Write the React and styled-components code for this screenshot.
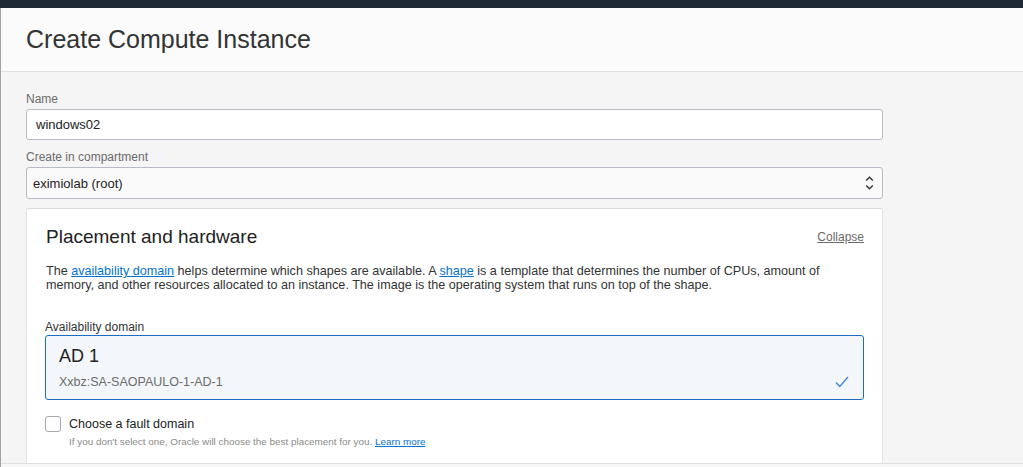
import React from "react";
import styled, { createGlobalStyle } from "styled-components";

const GlobalStyle = createGlobalStyle`
  html, body {
    margin: 0;
    padding: 0;
    height: 100%;
  }
  body {
    font-family: "Liberation Sans", Arial, Helvetica, sans-serif;
    color: #333;
    background: #f5f5f5;
  }
  * {
    box-sizing: border-box;
  }
`;

const Page = styled.div`
  display: flex;
  flex-direction: column;
  height: 100vh;
  overflow: hidden;
`;

const TopBar = styled.div`
  height: 8px;
  flex: none;
  background-color: #1f2935;
`;

const Frame = styled.div`
  flex: 1;
  display: flex;
  flex-direction: column;
  min-height: 0;
  border-left: 1px solid #a2a2a2;
`;

const Header = styled.header`
  flex: none;
  height: 64px;
  display: flex;
  align-items: center;
  padding: 0 25px 2px;
  background-color: #fbfbfb;
  border-bottom: 1px solid #e2e2e2;
`;

const Title = styled.h1`
  margin: 0;
  font-size: 25px;
  font-weight: 400;
  line-height: 28px;
  color: #333;
`;

const Body = styled.main`
  flex: 1;
  min-height: 0;
  overflow: hidden;
  padding: 20px 25px 0;
  background-color: #f5f5f5;
`;

const Form = styled.div`
  width: 857px;
  display: flex;
  flex-direction: column;
`;

const Field = styled.div`
  display: flex;
  flex-direction: column;
  gap: ${(p) => p.$gap ?? 3}px;
  margin-bottom: ${(p) => p.$space ?? 10}px;
`;

const Label = styled.label`
  font-size: 12px;
  line-height: 14px;
  color: ${(p) => (p.$dark ? "#333" : "#6b6b6b")};
`;

const TextInput = styled.input`
  height: 31px;
  width: 100%;
  padding: 0 9px;
  font-family: inherit;
  font-size: 13px;
  color: #222;
  background: #fff;
  border: 1px solid #b7bbc3;
  border-radius: 3px;
  outline: none;
`;

const Select = styled.div`
  height: 32px;
  display: flex;
  align-items: center;
  justify-content: space-between;
  padding: 0 8px 0 6px;
  font-size: 13px;
  color: #222;
  background: #fafafa;
  border: 1px solid #b7bbc3;
  border-radius: 3px;
`;

const Card = styled.section`
  background: #fff;
  border: 1px solid #e3e3e3;
  border-top-color: #dadada;
  border-radius: 2px 2px 0 0;
  padding: 16px 18px 40px;
`;

const CardHead = styled.div`
  display: flex;
  align-items: center;
  justify-content: space-between;
  height: 24px;
`;

const CardTitle = styled.h2`
  margin: 0;
  font-size: 19px;
  font-weight: 400;
  line-height: 22px;
  color: #222;
  padding-left: 1px;
`;

const MutedLink = styled.a`
  font-size: 12px;
  color: #6b6b6b;
  text-decoration: underline;
  cursor: pointer;
`;

const Description = styled.p`
  margin: 15px 0 28px;
  padding: 0 20px 0 1px;
  font-size: 12.6px;
  line-height: 14px;
  color: #333;
`;

const Link = styled.a`
  color: #0572ce;
  text-decoration: underline;
  cursor: pointer;
`;

const Tile = styled.div`
  display: flex;
  flex-direction: column;
  padding: 10px 14px 9px 13px;
  background: #f3f7fc;
  border: 1px solid #1c6dbf;
  border-radius: 3px;
`;

const TileTitle = styled.div`
  font-size: 18px;
  line-height: 20px;
  color: #222;
`;

const TileSub = styled.div`
  display: flex;
  align-items: center;
  justify-content: space-between;
  margin-top: 8px;
  height: 16px;
  font-size: 12.5px;
  color: #6b6b6b;
`;

const CheckRow = styled.div`
  display: flex;
  align-items: center;
  gap: 8px;
  margin-top: 16px;
`;

const Checkbox = styled.span`
  width: 16px;
  height: 16px;
  flex: none;
  background: #fff;
  border: 1px solid #a4a7ad;
  border-radius: 3px;
`;

const CheckLabel = styled.span`
  font-size: 12.5px;
  color: #222;
`;

const Hint = styled.div`
  margin: 4px 0 0 24px;
  font-size: 9.9px;
  color: #8a8a8a;
`;

const Footer = styled.footer`
  flex: none;
  height: 4px;
  background: #f7f7f7;
  border-top: 1px solid #e0e0e0;
`;

const Chevrons = () => (
  <svg width="9" height="16" viewBox="0 0 9 16" fill="none">
    <path d="M1.2 5.5 L4.5 2.2 L7.8 5.5" stroke="#333" strokeWidth="1.4" />
    <path d="M1.2 10.5 L4.5 13.8 L7.8 10.5" stroke="#333" strokeWidth="1.4" />
  </svg>
);

const CheckMark = () => (
  <svg width="14" height="12" viewBox="0 0 14 12" fill="none">
    <path d="M1 6.5 L4.8 10.5 L13 1" stroke="#3b87d2" strokeWidth="1.3" />
  </svg>
);

const App = () => {
  return (
    <>
      <GlobalStyle />
      <Page>
        <TopBar />
        <Frame>
          <Header>
            <Title>Create Compute Instance</Title>
          </Header>
          <Body>
            <Form>
              <Field>
                <Label>Name</Label>
                <TextInput defaultValue="windows02" />
              </Field>
              <Field $space={9}>
                <Label>Create in compartment</Label>
                <Select>
                  <span>eximiolab (root)</span>
                  <Chevrons />
                </Select>
              </Field>
              <Card>
                <CardHead>
                  <CardTitle>Placement and hardware</CardTitle>
                  <MutedLink>Collapse</MutedLink>
                </CardHead>
                <Description>
                  The <Link>availability domain</Link> helps determine which
                  shapes are available. A <Link>shape</Link> is a template that
                  determines the number of CPUs, amount of memory, and other
                  resources allocated to an instance. The image is the
                  operating system that runs on top of the shape.
                </Description>
                <Field $gap={1}>
                  <Label $dark>Availability domain</Label>
                  <Tile>
                    <TileTitle>AD 1</TileTitle>
                    <TileSub>
                      <span>Xxbz:SA-SAOPAULO-1-AD-1</span>
                      <CheckMark />
                    </TileSub>
                  </Tile>
                </Field>
                <CheckRow>
                  <Checkbox />
                  <CheckLabel>Choose a fault domain</CheckLabel>
                </CheckRow>
                <Hint>
                  If you don't select one, Oracle will choose the best placement
                  for you. <Link>Learn more</Link>
                </Hint>
              </Card>
            </Form>
          </Body>
          <Footer />
        </Frame>
      </Page>
    </>
  );
};

export default App;
